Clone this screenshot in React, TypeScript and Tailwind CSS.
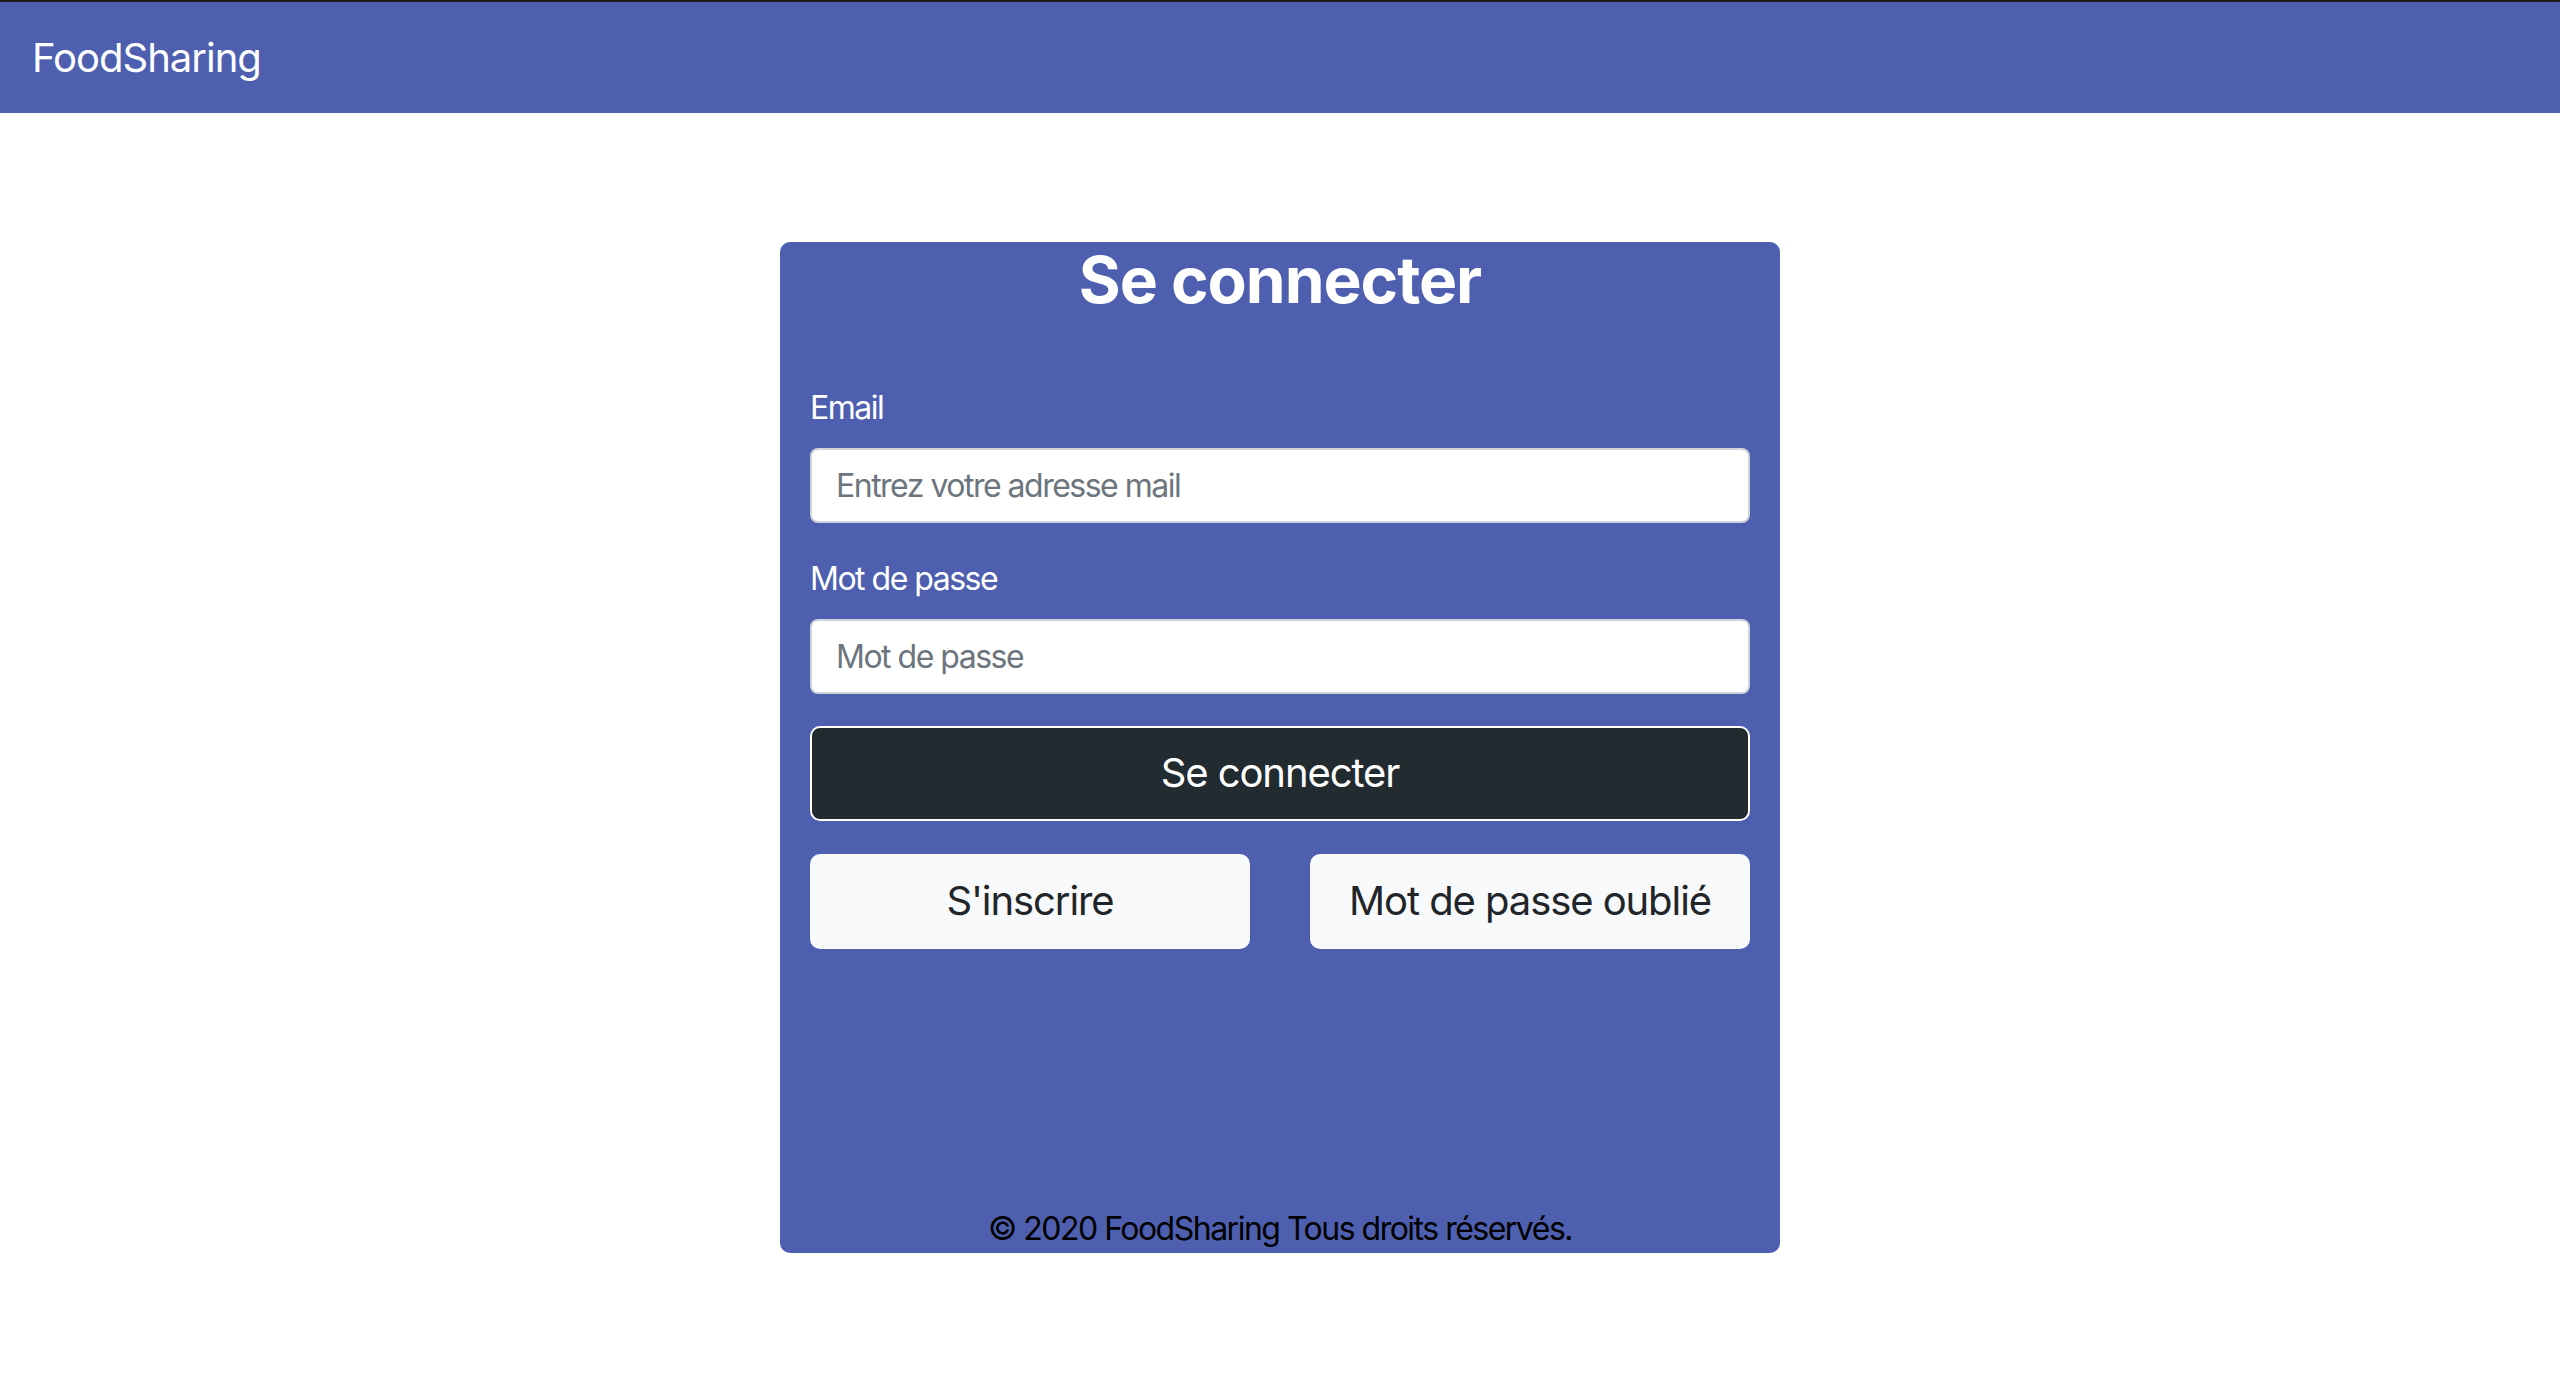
import React from "react";

export default function App() {
  return (
    <div
      className="min-h-[1378px] bg-white"
      style={{ fontFamily: "Inter, 'Noto Sans', Arial, sans-serif" }}
    >
      <nav className="border-t-2 border-[#1c1c1e] bg-[#4e5fb0] h-[113px] flex items-center px-[32px]">
        <span className="text-white text-[40px] leading-[60px] tracking-[-0.025em]">FoodSharing</span>
      </nav>

      <div className="mx-auto mt-[129px] w-[1000px] h-[1011px] bg-[#4e5fb0] rounded-[10px] px-[30px] flex flex-col">
        <h2 className="text-white text-[64px] font-bold leading-[1.2] text-center tracking-[-0.016em]">Se connecter</h2>

        <label className="mt-[65px] mb-[16px] text-white text-[32px] leading-[48px] tracking-[-0.047em]">Email</label>
        <input
          type="email"
          placeholder="Entrez votre adresse mail"
          className="w-full h-[75px] bg-white border-2 border-[#ced4da] rounded-[8px] px-[24px] text-[32px] tracking-[-0.047em] text-[#495057] placeholder:text-[#6c757d] outline-none"
        />

        <label className="mt-[32px] mb-[16px] text-white text-[32px] leading-[48px] tracking-[-0.047em]">Mot de passe</label>
        <input
          type="password"
          placeholder="Mot de passe"
          className="w-full h-[75px] bg-white border-2 border-[#ced4da] rounded-[8px] px-[24px] text-[32px] tracking-[-0.047em] text-[#495057] placeholder:text-[#6c757d] outline-none"
        />

        <button className="w-full mt-[32px] h-[95px] bg-[#222b2f] border-2 border-white rounded-[10px] text-white text-[40px] tracking-[-0.027em]">
          Se connecter
        </button>

        <div className="mt-[33px] grid grid-cols-2 gap-[60px]">
          <button className="h-[95px] bg-[#f8f9fa] rounded-[10px] text-[#212529] text-[40px] tracking-[-0.027em]">S'inscrire</button>
          <button className="h-[95px] bg-[#f8f9fa] rounded-[10px] text-[#212529] text-[40px] tracking-[-0.027em]">Mot de passe oublié</button>
        </div>

        <p className="mt-auto text-black text-[32px] leading-[48px] text-center tracking-[-0.047em]">
          © 2020 FoodSharing Tous droits réservés.
        </p>
      </div>
    </div>
  );
}
